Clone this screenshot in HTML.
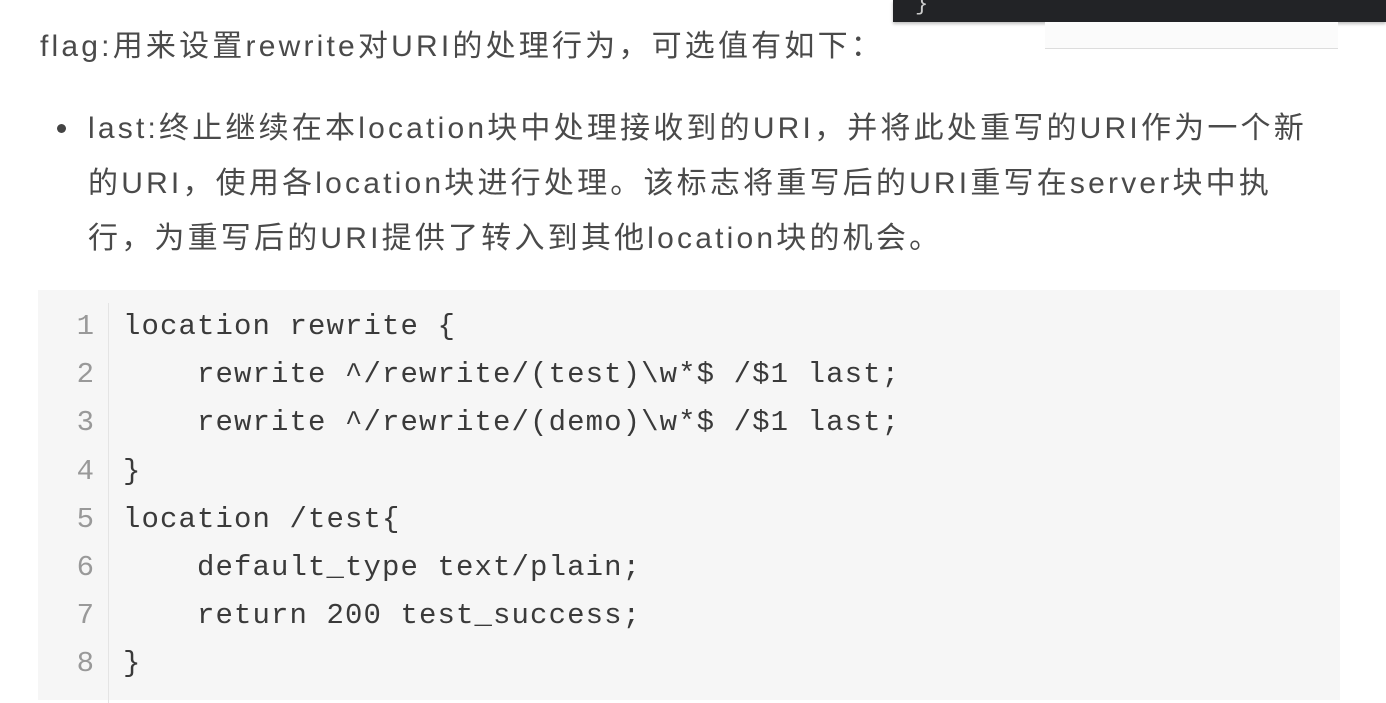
<!DOCTYPE html>
<html><head><meta charset="utf-8"><style>
body{margin:0;width:1386px;height:692px;overflow:hidden;background:#fff;font-family:"Liberation Sans","Noto Sans CJK SC",sans-serif;color:#4a4a4a;position:relative}
.dark{position:absolute;left:893px;top:0;width:493px;height:22px;background:#222326;box-shadow:0 2px 3px rgba(0,0,0,.25)}
.dark span{position:absolute;left:22px;top:-8px;color:#ccc;font:22px "Liberation Mono",monospace}
.btn{position:absolute;left:1045px;top:22px;width:293px;height:26px;border-bottom:1px solid #ddd;background:#fbfbfb;color:#ccc;font-size:16px;text-align:center}
.p{position:absolute;left:40px;top:27px;font-size:30px;line-height:40px;white-space:nowrap;letter-spacing:3.2px}
.li{position:absolute;left:88px;top:101px;font-size:30px;line-height:55px;white-space:nowrap;letter-spacing:3.2px}
.dot{position:absolute;left:57px;top:124px;width:9px;height:9px;border-radius:50%;background:#444}
.code{position:absolute;left:38px;top:290px;width:1302px;height:410px;background:#f6f6f6}
.gut{position:absolute;left:38px;top:303px;width:70px;border-right:1px solid #e4e4e4;height:400px}
.ln{position:absolute;top:303px;font:29px/48.2px "Liberation Mono",monospace;white-space:pre}
.n{left:58px;width:36px;text-align:right;color:#999}
.c{left:123px;color:#3a3a3a;letter-spacing:1.1px}
</style></head><body>
<div class="dark"><span>}</span></div>
<div class="btn"></div>
<div class="p">flag:用来设置rewrite对URI的处理行为，可选值有如下：</div>
<div class="dot"></div>
<div class="li">last:终止继续在本location块中处理接收到的URI，并将此处重写的URI作为一个新<br>的URI，使用各location块进行处理。该标志将重写后的URI重写在server块中执<br>行，为重写后的URI提供了转入到其他location块的机会。</div>
<div class="code"></div>
<div class="gut"></div>
<div class="ln n">1
2
3
4
5
6
7
8</div>
<div class="ln c">location rewrite {
    rewrite ^/rewrite/(test)\w*$ /$1 last;
    rewrite ^/rewrite/(demo)\w*$ /$1 last;
}
location /test{
    default_type text/plain;
    return 200 test_success;
}</div>
</body></html>
